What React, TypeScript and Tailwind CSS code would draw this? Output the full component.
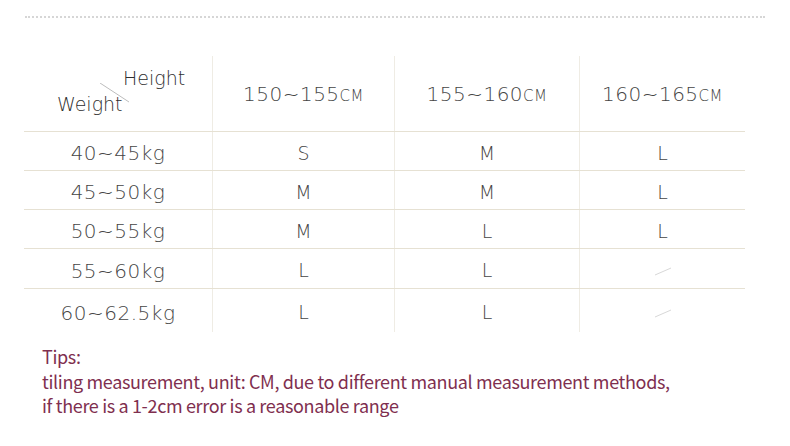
const cols = ["w-[189px]", "w-[182px]", "w-[185px]", "w-[165px]"];

const heights = ["150~155", "155~160", "160~165"];

const rows: { weight: string; sizes: string[] }[] = [
  { weight: "40~45kg", sizes: ["S", "M", "L"] },
  { weight: "45~50kg", sizes: ["M", "M", "L"] },
  { weight: "50~55kg", sizes: ["M", "L", "L"] },
  { weight: "55~60kg", sizes: ["L", "L", "-"] },
  { weight: "60~62.5kg", sizes: ["L", "L", "-"] },
];

const rowHeights = ["h-[39px]", "h-[39px]", "h-[39px]", "h-[40px]", "h-[43px]"];

function Slash() {
  // petit trait en biais pour les tailles non dispo
  return (
    <svg width="20" height="12" viewBox="0 0 20 12">
      <line x1="2" y1="10" x2="18" y2="3" stroke="#d8d8d8" strokeWidth="1" />
    </svg>
  );
}

function Cell({ i, children, className = "" }: { i: number; children: React.ReactNode; className?: string }) {
  return (
    <div
      className={`${cols[i]} ${i < 3 ? "border-r border-[#efece4]" : ""} flex items-center justify-center ${className}`}
    >
      {children}
    </div>
  );
}

export default function App() {
  return (
    <div
      className="w-[790px] h-[446px] bg-white overflow-hidden"
      style={{ fontFamily: "'DejaVu Sans', sans-serif" }}
    >
      <div className="mx-[25px] mt-[16px] border-t-2 border-dotted border-[#d6d6d6]" />

      <div className="ml-[24px] mt-[38px] w-[721px] text-[#454545] font-extralight">
        <div className="flex h-[76px] border-b border-[#e6e1d3]">
          <Cell i={0} className="relative !justify-start !items-start">
            <div className="flex flex-col pt-[9px] text-[19px] leading-[26px] text-[#2e2e2e]">
              <span className="ml-[99px]">Height</span>
              <span className="ml-[33px]">Weight</span>
            </div>
            <svg className="absolute left-[76px] top-[27px]" width="32" height="22" viewBox="0 0 32 22">
              <line x1="0" y1="0" x2="29" y2="19" stroke="#bdbdbd" strokeWidth="1" />
            </svg>
          </Cell>
          {heights.map((h, i) => (
            <Cell key={h} i={i + 1}>
              <span className="text-[20px] tracking-[0.5px]">
                {h}
                <span className="text-[15px]">CM</span>
              </span>
            </Cell>
          ))}
        </div>

        {rows.map((r, ri) => (
          <div
            key={r.weight}
            className={`flex ${rowHeights[ri]} ${ri < rows.length - 1 ? "border-b border-[#e6e1d3]" : ""}`}
          >
            <Cell i={0} className="pt-[4px]">
              <span className="text-[20px] tracking-[0.5px]">{r.weight}</span>
            </Cell>
            {r.sizes.map((s, si) => (
              <Cell key={si} i={si + 1} className="pt-[4px]">
                {s === "-" ? <Slash /> : <span className="text-[19px]">{s}</span>}
              </Cell>
            ))}
          </div>
        ))}
      </div>

      <div
        className="ml-[42px] mt-[12px] text-[18px] leading-[24.5px] tracking-[-0.35px] text-[#7f2f4f]"
        style={{ fontFamily: "'Noto Sans CJK SC', sans-serif" }}
      >
        <p>Tips:</p>
        <p>tiling measurement, unit: CM, due to different manual measurement methods,</p>
        <p>if there is a 1-2cm error is a reasonable range</p>
      </div>
    </div>
  );
}
